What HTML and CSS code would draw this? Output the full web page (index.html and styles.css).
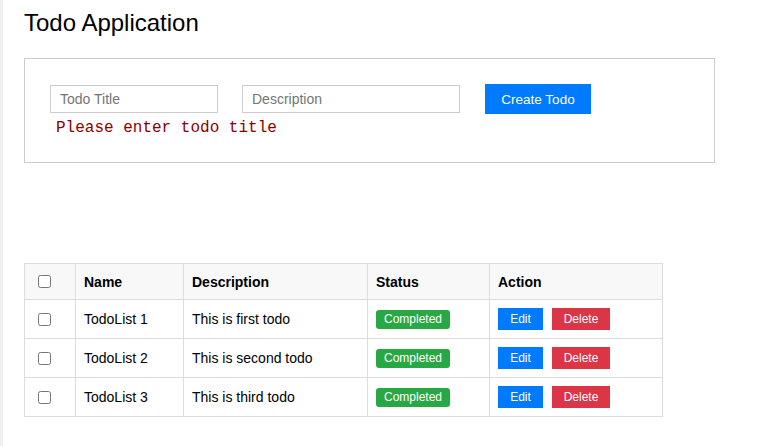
FILE: index.html
```html
<!DOCTYPE html>
<html lang="en">
<head>
<meta charset="utf-8">
<title>Todo Application</title>
<link rel="stylesheet" href="styles.css">
</head>
<body>
<div class="app">
  <h1 class="title">Todo Application</h1>
  <div class="form-box">
    <div class="form-row">
      <input class="input input-title" type="text" placeholder="Todo Title">
      <input class="input input-desc" type="text" placeholder="Description">
      <button class="btn btn-create">Create Todo</button>
    </div>
    <div class="error">Please enter todo title</div>
  </div>
  <table class="todo-table">
    <colgroup>
      <col class="w-check">
      <col class="w-name">
      <col class="w-desc">
      <col class="w-status">
      <col class="w-action">
    </colgroup>
    <thead>
      <tr>
        <th class="col-check"><input type="checkbox"></th>
        <th>Name</th>
        <th>Description</th>
        <th>Status</th>
        <th>Action</th>
      </tr>
    </thead>
    <tbody>
      <tr>
        <td class="col-check"><input type="checkbox"></td>
        <td>TodoList 1</td>
        <td>This is first todo</td>
        <td><span class="badge">Completed</span></td>
        <td><div class="actions"><button class="btn btn-sm btn-edit">Edit</button><button class="btn btn-sm btn-delete">Delete</button></div></td>
      </tr>
      <tr>
        <td class="col-check"><input type="checkbox"></td>
        <td>TodoList 2</td>
        <td>This is second todo</td>
        <td><span class="badge">Completed</span></td>
        <td><div class="actions"><button class="btn btn-sm btn-edit">Edit</button><button class="btn btn-sm btn-delete">Delete</button></div></td>
      </tr>
      <tr>
        <td class="col-check"><input type="checkbox"></td>
        <td>TodoList 3</td>
        <td>This is third todo</td>
        <td><span class="badge">Completed</span></td>
        <td><div class="actions"><button class="btn btn-sm btn-edit">Edit</button><button class="btn btn-sm btn-delete">Delete</button></div></td>
      </tr>
    </tbody>
  </table>
</div>
</body>
</html>
```
FILE: styles.css
```css
html, body {
  margin: 0;
  padding: 0;
  background: #ffffff;
}
body {
  font-family: "Liberation Sans", Arial, sans-serif;
  color: #000;
  border-left: 3px solid #f0f0f0;
  min-height: 100vh;
  box-sizing: border-box;
}
.app {
  padding: 0 0 0 21px;
}
.title {
  margin: 0;
  padding-top: 9px;
  font-size: 24px;
  font-weight: normal;
  line-height: 28px;
}
.form-box {
  margin-top: 21px;
  width: 691px;
  height: 105px;
  box-sizing: border-box;
  border: 1px solid #cccccc;
  padding: 26px 25px 0;
}
.form-row {
  display: flex;
  align-items: center;
  height: 28px;
}
.input {
  box-sizing: border-box;
  height: 28px;
  border: 1px solid #cccccc;
  padding: 0 9px;
  font-family: "Liberation Sans", Arial, sans-serif;
  font-size: 14px;
  color: #333;
  outline: none;
  margin: 0;
}
.input::placeholder {
  color: #757575;
}
.input-title {
  width: 168px;
  margin-right: 24px;
}
.input-desc {
  width: 218px;
  margin-right: 25px;
}
.error {
  margin-top: 6px;
  padding-left: 6px;
  font-family: "Liberation Mono", "Courier New", monospace;
  font-size: 16px;
  line-height: 18px;
  color: #8b0000;
}
.btn {
  border: none;
  color: #fff;
  font-family: "Liberation Sans", Arial, sans-serif;
  cursor: pointer;
  padding: 0;
  margin: 0;
}
.btn-create {
  background: #007bff;
  width: 106px;
  height: 30px;
  font-size: 13.5px;
}
.todo-table {
  margin-top: 100px;
  border-collapse: collapse;
  table-layout: fixed;
  width: 638px;
  font-size: 14px;
}
.w-check { width: 51px; }
.w-name { width: 108px; }
.w-desc { width: 184px; }
.w-status { width: 122px; }
.w-action { width: 173px; }
.todo-table th,
.todo-table td {
  border: 1px solid #dddddd;
  text-align: left;
  padding: 0 8px;
}
.todo-table th {
  background: #f8f8f8;
  font-weight: bold;
  height: 35px;
}
.todo-table td {
  height: 38px;
}
.todo-table .col-check {
  padding: 0 0 0 13px;
}
.col-check input {
  margin: 0;
  width: 13px;
  height: 13px;
  display: block;
}
.badge {
  display: inline-block;
  vertical-align: middle;
  background: #28a745;
  color: #fff;
  font-size: 12px;
  font-weight: normal;
  line-height: 19px;
  width: 74px;
  text-align: center;
  border-radius: 3px;
}
.actions {
  display: flex;
  gap: 9px;
}
.btn-sm {
  height: 22px;
  font-size: 12px;
}
.btn-edit {
  background: #007bff;
  width: 45px;
}
.btn-delete {
  background: #dc3545;
  width: 58px;
}
```
